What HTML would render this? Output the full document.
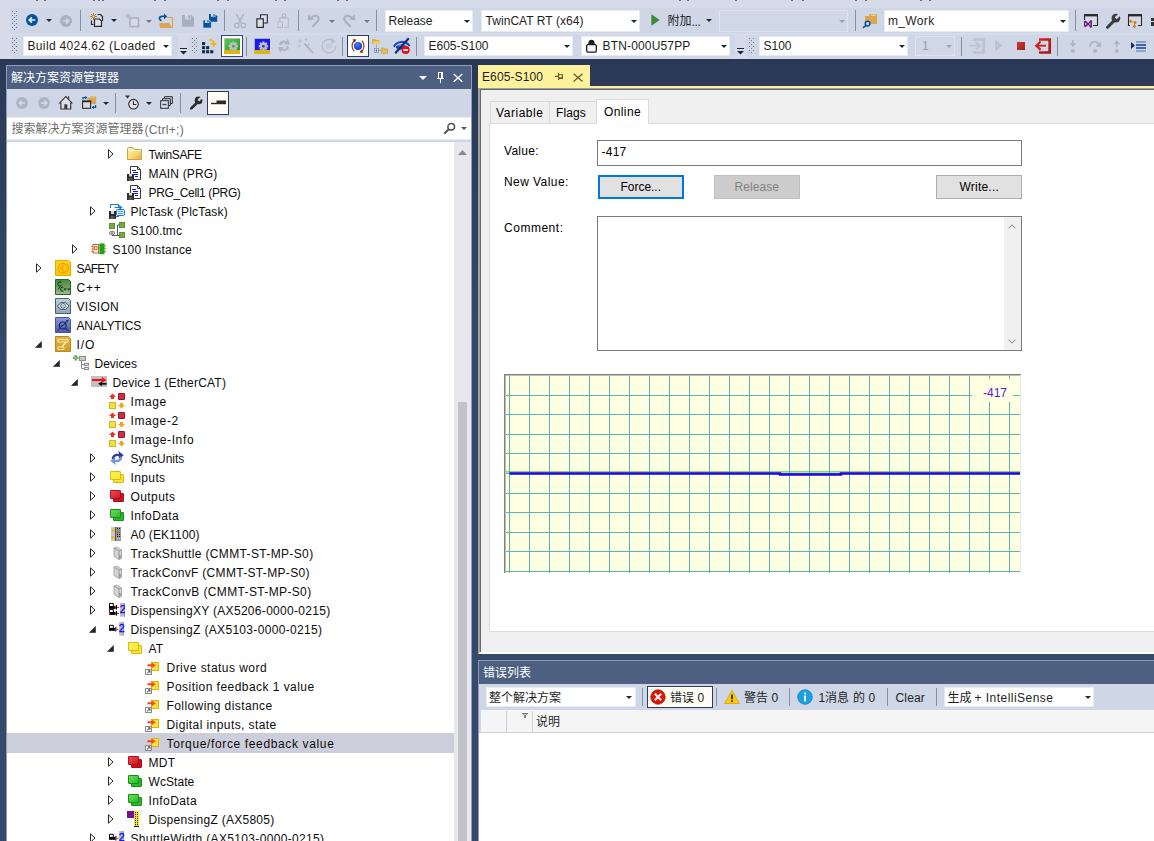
<!DOCTYPE html>
<html><head><meta charset="utf-8"><title>E605-S100 - TwinCAT</title><style>
html,body{margin:0;padding:0}
body{width:1154px;height:841px;overflow:hidden;position:relative;background:#D6DBE9;font-family:'Liberation Sans',sans-serif;}
.b{position:absolute;box-sizing:border-box}
.t{position:absolute;white-space:pre;line-height:16px;height:16px}
.c{font-family:'Liberation Sans','Noto Sans CJK SC',sans-serif;}
</style></head><body>
<svg width="0" height="0" style="position:absolute"><symbol id="s_folder" viewBox="0 0 16 16"><defs><linearGradient id="fg" x1="0" y1="0" x2="1" y2="1"><stop offset="0" stop-color="#FFF3B8"/><stop offset="0.55" stop-color="#FBD973"/><stop offset="1" stop-color="#E8A93A"/></linearGradient></defs><path d="M0.5 2.5Q0.5 1.5 1.5 1.5H6L7.5 3.5H14.5V13.5H0.5Z" fill="url(#fg)" stroke="#C9A24D" stroke-width="1"/><path d="M1 4.5H14" stroke="#FFF8D8" stroke-width="1"/></symbol><symbol id="s_pou" viewBox="0 0 16 16"><path d="M3.5 1.5H10.5L13.5 4.5V14.5H3.5Z" fill="#fff" stroke="#3a3a3a" stroke-width="1"/><path d="M10.5 1.5V4.5H13.5" fill="none" stroke="#3a3a3a" stroke-width="1"/><path d="M5 5.5H9M6 7.5H11M6 9.5H11M8 11.5H11" stroke="#1616E0" stroke-width="1"/><rect x="0" y="9" width="7" height="7" fill="#2b2b2b"/><rect x="2" y="9" width="3" height="2.5" fill="#d8d8d8"/><rect x="1.5" y="13" width="4" height="3" fill="#555"/></symbol><symbol id="s_plctask" viewBox="0 0 16 16"><path d="M1.5 5V1.5H9.5V4" fill="#fff" stroke="#1E78D2" stroke-width="1"/><rect x="7.5" y="6.5" width="8" height="6" rx="1" fill="#D7E8FA" stroke="#1E78D2"/><path d="M9 8.5H14M9 10.5H14" stroke="#5AA0E6" stroke-width="1"/><path d="M10 2.5L12.5 4.5L10 6.5M5.5 4.5H12" fill="none" stroke="#1E78D2" stroke-width="1.2"/><rect x="0" y="8" width="7" height="8" fill="#2b2b2b"/><rect x="2" y="8" width="3" height="3" fill="#d8d8d8"/><rect x="1.5" y="13" width="4" height="3" fill="#555"/><path d="M7 13.5H10" stroke="#1E78D2"/></symbol><symbol id="s_tmc" viewBox="0 0 16 16"><rect x="0.5" y="1.5" width="5" height="5" fill="#6FAE3C" stroke="#5B9431"/><rect x="10.5" y="0.5" width="5" height="5" fill="#6FAE3C" stroke="#5B9431"/><rect x="10.5" y="10.5" width="5" height="5" fill="#6FAE3C" stroke="#5B9431"/><path d="M10.5 3H8.5V13.5H10.5M3 13.5H8.5" fill="none" stroke="#555" stroke-width="1"/><ellipse cx="3" cy="11" rx="2.6" ry="1.8" fill="#ddd" stroke="#666" stroke-width="0.8"/><circle cx="3" cy="11" r="0.8" fill="#444"/></symbol><symbol id="s_instance" viewBox="0 0 16 16"><rect x="2" y="3.5" width="5.5" height="8.5" fill="#FFF1E0" stroke="#C8501E" stroke-width="0.9"/><path d="M0.3 5.5H2M0.3 8H2M0.3 10.5H2M3.5 5.5H6V8.5H3.5Z" stroke="#C8501E" stroke-width="0.8" fill="none"/><rect x="8.4" y="2.4" width="5.2" height="10.8" fill="#12AA12"/><path d="M13.6 5H15.2M13.6 7.8H15.2M13.6 10.6H15.2M7.5 12.6H8.6" stroke="#C8501E" stroke-width="0.9"/></symbol><symbol id="s_safety" viewBox="0 0 16 16"><defs><linearGradient id="qFFD21A" x1="0" y1="0" x2="0" y2="1"><stop offset="0" stop-color="#FFD21A"/><stop offset="1" stop-color="#FFC400"/></linearGradient></defs><path d="M0.5 0.5H13.5L15.5 2.5V15.5H0.5Z" fill="url(#qFFD21A)" stroke="#E0A800"/><path d="M7.8 3V13.4" stroke="#E39400" stroke-width="0.9"/><path d="M7.8 3.3H9.5L10 4.7L11.4 4.1L12.5 5.3L11.8 6.6L13.4 7.2V9L11.8 9.6L12.5 10.9L11.4 12.1L10 11.5L9.5 13.1H7.8" fill="none" stroke="#E39400" stroke-width="0.9"/><path d="M7.8 3.3C6 3 5 4 5 5.2C3.5 5.2 3 6.8 3.8 7.8C2.5 8.5 2.8 10.5 4.2 10.8C4.2 12.5 6 13.4 7.8 13.1" fill="none" stroke="#E39400" stroke-width="0.9"/><path d="M5.5 7.5H7.8M5.5 7.5V9.5" fill="none" stroke="#E39400" stroke-width="0.8"/></symbol><symbol id="s_cpp" viewBox="0 0 16 16"><defs><linearGradient id="q4E8440" x1="0" y1="0" x2="0" y2="1"><stop offset="0" stop-color="#4E8440"/><stop offset="1" stop-color="#A4B784"/></linearGradient></defs><path d="M0.5 0.5H13.5L15.5 2.5V15.5H0.5Z" fill="url(#q4E8440)" stroke="#1E6B2E"/><path d="M6.3 3.6C5 2.2 2.8 3 2.8 5C2.8 6.8 4.6 7.6 6 6.6" fill="none" stroke="#0C4A1C" stroke-width="1.1"/><path d="M2.8 10.5L7 5.5" stroke="#0C4A1C" stroke-width="1"/><path d="M8.3 8.6C7 7.6 5.6 8.6 5.6 10.2C5.6 11.8 7 12.8 8.3 11.8" fill="none" stroke="#0C4A1C" stroke-width="1.1"/><path d="M8.8 10.2H11.4M10.1 8.9V11.5M12.4 10.2H15M13.7 8.9V11.5" stroke="#0C4A1C" stroke-width="1"/></symbol><symbol id="s_vision" viewBox="0 0 16 16"><defs><linearGradient id="qBFD0DA" x1="0" y1="0" x2="0" y2="1"><stop offset="0" stop-color="#BFD0DA"/><stop offset="1" stop-color="#8AA6B6"/></linearGradient></defs><path d="M0.5 0.5H13.5L15.5 2.5V15.5H0.5Z" fill="url(#qBFD0DA)" stroke="#4A6270"/><path d="M2.3 8L6 4.6H10.8L14 8L10.8 11.4H6Z" fill="#CFDDE5" stroke="#3A515E" stroke-width="0.9"/><circle cx="8.1" cy="7.9" r="2.3" fill="#F4F8FA" stroke="#3A515E" stroke-width="0.9"/><circle cx="8.1" cy="7.9" r="0.9" fill="#8FA6B2"/></symbol><symbol id="s_analytics" viewBox="0 0 16 16"><defs><linearGradient id="q8C98D2" x1="0" y1="0" x2="0" y2="1"><stop offset="0" stop-color="#8C98D2"/><stop offset="1" stop-color="#4C5BA6"/></linearGradient></defs><path d="M0.5 0.5H13.5L15.5 2.5V15.5H0.5Z" fill="url(#q8C98D2)" stroke="#4654A4"/><circle cx="7.8" cy="8.4" r="3.4" fill="none" stroke="#1E2A6E" stroke-width="1.2"/><path d="M2.6 13.6L12.6 3.6" stroke="#1E2A6E" stroke-width="1"/><path d="M13.6 2.6L10.6 3.8L12.4 5.6Z" fill="#1E2A6E"/><path d="M10.4 11L13.6 14.2" stroke="#1E2A6E" stroke-width="1.1"/><path d="M5.6 9C6.4 6.6 7.4 10.4 8.4 8.4S9.6 7.2 10 8" fill="none" stroke="#1E2A6E" stroke-width="0.8"/></symbol><symbol id="s_io" viewBox="0 0 16 16"><defs><linearGradient id="qE3B445" x1="0" y1="0" x2="0" y2="1"><stop offset="0" stop-color="#E3B445"/><stop offset="1" stop-color="#D09A25"/></linearGradient></defs><path d="M0.5 0.5H13.5L15.5 2.5V15.5H0.5Z" fill="url(#qE3B445)" stroke="#B98A18"/><path d="M3 3.5H13V6H3ZM3 11H9V13.5H3Z" fill="none" stroke="#FBE6A8" stroke-width="1"/><path d="M11 6L7 11" stroke="#FBE6A8" stroke-width="1.6"/></symbol><symbol id="s_devices" viewBox="0 0 16 16"><path d="M1.7 0H3.8V1.7H5.5V3.8H3.8V5.5H1.7V3.8H0V1.7H1.7Z" fill="#3E9E3E"/><path d="M2.75 0.9V4.6M0.9 2.75H4.6" stroke="#9BE09B" stroke-width="0.7"/><rect x="6.5" y="1.5" width="6" height="4" fill="#C8C8C8" stroke="#8A8A8A"/><path d="M8.5 6V13.5H11M8.5 9.5H11" fill="none" stroke="#8A8A8A"/><rect x="11.5" y="8.5" width="4" height="2" fill="#E8E8E8" stroke="#8A8A8A"/><rect x="11.5" y="12.5" width="4" height="2" fill="#E8E8E8" stroke="#8A8A8A"/></symbol><symbol id="s_ethercat" viewBox="0 0 16 16"><rect x="0" y="2" width="16" height="11" fill="#C0C0C0"/><path d="M1 6H12" stroke="#F01010" stroke-width="2"/><path d="M10.8 3.1L15.6 6L10.8 8.9Z" fill="#F01010"/><path d="M15.6 9.8H10" stroke="#111" stroke-width="1.8"/><path d="M11 7.4L7 9.8L11 12.2Z" fill="#111"/></symbol><symbol id="s_image" viewBox="0 0 16 16"><path d="M3.5 0.5L7 4H5V6H2V4H0Z" fill="#F0301E"/><rect x="9.5" y="0.5" width="6" height="6" rx="0.3" fill="#D03044" stroke="#9A1424"/><rect x="0.5" y="9.5" width="6" height="6" fill="#F2E03C" stroke="#D2B81E"/><path d="M12.5 15.5L9 12H11V10H14V12H16Z" fill="#F2A41A"/></symbol><symbol id="s_sync" viewBox="0 0 16 16"><path d="M2.6 8.8C3 5 6.8 3 10 4.1L9.2 0.8L14.8 5.2L9.9 8.8L9.7 6.2C7.6 5.6 5.4 6.6 5 9.2Z" fill="#2F3FA0"/><path d="M13.4 7.2C13 11 9.2 13 6 11.9L6.8 15.2L1.2 10.8L6.1 7.2L6.3 9.8C8.4 10.4 10.6 9.4 11 6.8Z" fill="#7C92DC"/></symbol><symbol id="s_inputs" viewBox="0 0 16 16"><defs><linearGradient id="vF6F65A" x1="0" y1="0" x2="1" y2="1"><stop offset="0" stop-color="#F6F65A"/><stop offset="1" stop-color="#F2E53A"/></linearGradient></defs><rect x="4.5" y="5.5" width="10" height="8" rx="0.4" fill="#F2E53A" stroke="#E2B800"/><rect x="1.5" y="2.5" width="10" height="8" rx="0.4" fill="url(#vF6F65A)" stroke="#E2B800"/></symbol><symbol id="s_outputs" viewBox="0 0 16 16"><defs><linearGradient id="vF0505A" x1="0" y1="0" x2="1" y2="1"><stop offset="0" stop-color="#F0505A"/><stop offset="1" stop-color="#C8141E"/></linearGradient></defs><rect x="4.5" y="5.5" width="10" height="8" rx="0.4" fill="#C8141E" stroke="#B00E18"/><rect x="1.5" y="2.5" width="10" height="8" rx="0.4" fill="url(#vF0505A)" stroke="#B00E18"/></symbol><symbol id="s_info" viewBox="0 0 16 16"><defs><linearGradient id="v6EE05A" x1="0" y1="0" x2="1" y2="1"><stop offset="0" stop-color="#6EE05A"/><stop offset="1" stop-color="#2EB62A"/></linearGradient></defs><rect x="4.5" y="5.5" width="10" height="8" rx="0.4" fill="#2EB62A" stroke="#149014"/><rect x="1.5" y="2.5" width="10" height="8" rx="0.4" fill="url(#v6EE05A)" stroke="#149014"/></symbol><symbol id="s_ek" viewBox="0 0 16 16"><rect x="2" y="1" width="4" height="14" fill="#C9C9C9"/><rect x="2.5" y="3" width="3" height="3" fill="#F5B21E"/><rect x="2.5" y="10" width="3" height="3" fill="#F5B21E"/><rect x="6" y="1" width="6" height="14" fill="#9A9A9A"/><rect x="6" y="1" width="1" height="14" fill="#555"/><g shape-rendering="crispEdges"><rect x="8" y="2" width="1" height="1" fill="#111"/><rect x="10" y="2" width="1" height="1" fill="#111"/><rect x="8" y="4" width="1" height="1" fill="#0A0"/><rect x="10" y="4" width="1" height="1" fill="#0A0"/><rect x="8" y="6" width="1" height="1" fill="#E00"/><rect x="10" y="6" width="1" height="1" fill="#E00"/><rect x="8" y="8" width="1" height="1" fill="#111"/><rect x="10" y="8" width="1" height="1" fill="#111"/><rect x="8" y="10" width="1" height="1" fill="#00E"/><rect x="10" y="10" width="1" height="1" fill="#00E"/><rect x="8" y="12" width="1" height="1" fill="#EE0"/><rect x="10" y="12" width="1" height="1" fill="#EE0"/></g></symbol><symbol id="s_box" viewBox="0 0 16 16"><path d="M5 3L7.5 2L12.5 5V13.5L10 14.5L5 11.5Z" fill="#D4D4D4" stroke="#9C9C9C" stroke-width="0.8"/><path d="M5 3L10 6V14.5M10 6L12.5 5" fill="none" stroke="#8C8C8C" stroke-width="0.8"/><path d="M11 10V13" stroke="#777" stroke-width="1"/></symbol><symbol id="s_drive2" viewBox="0 0 16 16"><rect x="0" y="4" width="6.6" height="2.9" fill="#000"/><path d="M0.5 4V1.4H4.3V4" fill="none" stroke="#000" stroke-width="1"/><rect x="6.8999999999999995" y="3" width="1.1" height="4.6" fill="#000"/><rect x="8.0" y="4.9" width="2" height="1" fill="#F01010"/><rect x="0" y="10" width="6.6" height="2.9" fill="#000"/><path d="M0.5 10V7.4H4.3V10" fill="none" stroke="#000" stroke-width="1"/><rect x="6.8999999999999995" y="9" width="1.1" height="4.6" fill="#000"/><rect x="8.0" y="10.9" width="2" height="1" fill="#F01010"/><rect x="0" y="9" width="1" height="4" fill="#F01010"/><rect x="11" y="1" width="5" height="13.7" fill="#BEBEBE"/><rect x="15" y="1" width="1" height="13.7" fill="#9A9A9A"/><text x="10.8" y="11.3" font-size="10.5" fill="#0A0AFF" stroke="#0A0AFF" stroke-width="0.3" font-family="Liberation Sans, sans-serif">2</text></symbol><symbol id="s_drive1" viewBox="0 0 16 16"><rect x="0" y="6.9" width="6.0" height="2.9" fill="#000"/><path d="M0.5 6.9V4.3H4.3V6.9" fill="none" stroke="#000" stroke-width="1"/><rect x="6.3" y="5.9" width="1.1" height="4.6" fill="#000"/><rect x="7.4" y="7.800000000000001" width="2" height="1" fill="#F01010"/><rect x="10.1" y="1" width="4.8" height="13.7" fill="#BEBEBE"/><rect x="14" y="1" width="0.9" height="13.7" fill="#9A9A9A"/><text x="9.8" y="11.3" font-size="10.5" fill="#0A0AFF" stroke="#0A0AFF" stroke-width="0.3" font-family="Liberation Sans, sans-serif">2</text></symbol><symbol id="s_link" viewBox="0 0 16 16"><rect x="6.5" y="3.5" width="7" height="8" fill="#F8E040" stroke="#E6B400"/><path d="M2.5 6.3H8" stroke="#F0401E" stroke-width="2"/><path d="M6.6 3.4L10.8 6.3L6.6 9.2Z" fill="#F0501E"/><rect x="0.5" y="10.5" width="6" height="5" fill="#F4F4F4" stroke="#8A8A8A"/><path d="M2 14.3L5 11.8M3 11.8H5V13.8" fill="none" stroke="#444" stroke-width="0.9"/></symbol><symbol id="s_ax5805" viewBox="0 0 16 16"><rect x="0" y="0" width="7" height="7" fill="#7A0E8E"/><rect x="7" y="0" width="5" height="16" fill="#F2EE1A"/><g shape-rendering="crispEdges" fill="#111"><rect x="8" y="1" width="1" height="1"/><rect x="10" y="1" width="1" height="1"/><rect x="8" y="3" width="1" height="1"/><rect x="10" y="3" width="1" height="1"/><rect x="8" y="5" width="1" height="1" fill="#E00"/><rect x="10" y="5" width="1" height="1" fill="#E00"/><rect x="8" y="7" width="1" height="1"/><rect x="10" y="7" width="1" height="1"/><rect x="8" y="9" width="1" height="1" fill="#00E"/><rect x="10" y="9" width="1" height="1" fill="#00E"/><rect x="8" y="11" width="1" height="1"/><rect x="10" y="11" width="1" height="1"/><rect x="8" y="13" width="1" height="1"/><rect x="10" y="13" width="1" height="1"/><rect x="7" y="15" width="5" height="1"/></g></symbol></svg>
<div class="b" style="left:36px;top:0px;width:2px;height:1px;background:#6E6878;"></div>
<div class="b" style="left:44px;top:0px;width:2px;height:1px;background:#6E6878;"></div>
<div class="b" style="left:93px;top:0px;width:2px;height:1px;background:#6E6878;"></div>
<div class="b" style="left:98px;top:0px;width:2px;height:1px;background:#6E6878;"></div>
<div class="b" style="left:102px;top:0px;width:2px;height:1px;background:#6E6878;"></div>
<div class="b" style="left:154px;top:0px;width:2px;height:1px;background:#6E6878;"></div>
<div class="b" style="left:164px;top:0px;width:2px;height:1px;background:#6E6878;"></div>
<div class="b" style="left:217px;top:0px;width:2px;height:1px;background:#6E6878;"></div>
<div class="b" style="left:227px;top:0px;width:2px;height:1px;background:#6E6878;"></div>
<div class="b" style="left:275px;top:0px;width:2px;height:1px;background:#6E6878;"></div>
<div class="b" style="left:284px;top:0px;width:2px;height:1px;background:#6E6878;"></div>
<div class="b" style="left:337px;top:0px;width:2px;height:1px;background:#6E6878;"></div>
<div class="b" style="left:346px;top:0px;width:2px;height:1px;background:#6E6878;"></div>
<div class="b" style="left:679px;top:0px;width:2px;height:1px;background:#6E6878;"></div>
<div class="b" style="left:687px;top:0px;width:2px;height:1px;background:#6E6878;"></div>
<div class="b" style="left:735px;top:0px;width:2px;height:1px;background:#6E6878;"></div>
<div class="b" style="left:791px;top:0px;width:2px;height:1px;background:#6E6878;"></div>
<div class="b" style="left:802px;top:0px;width:2px;height:1px;background:#6E6878;"></div>
<div class="b" style="left:855px;top:0px;width:2px;height:1px;background:#6E6878;"></div>
<div class="b" style="left:865px;top:0px;width:2px;height:1px;background:#6E6878;"></div>
<div class="b" style="left:920px;top:0px;width:2px;height:1px;background:#6E6878;"></div>
<div class="b" style="left:929px;top:0px;width:2px;height:1px;background:#6E6878;"></div>
<div class="b" style="left:10px;top:8px;width:1144px;height:25px;background:#CFD6E5;border-radius:2px 0 0 2px;"></div>
<div class="b" style="left:10px;top:35px;width:168px;height:22.5px;background:#CFD6E5;border-radius:2px;"></div>
<div class="b" style="left:189px;top:35px;width:546px;height:22.5px;background:#CFD6E5;border-radius:2px;"></div>
<div class="b" style="left:746px;top:35px;width:408px;height:22.5px;background:#CFD6E5;border-radius:2px 0 0 2px;"></div>
<svg class="b" style="left:12px;top:11px;shape-rendering:crispEdges;" width="5" height="20" viewBox="0 0 5 20"><g fill="#6A7695"><rect x="0" y="0" width="1" height="1"/><rect x="4" y="0" width="1" height="1"/><rect x="2" y="2" width="1" height="1"/><rect x="0" y="4" width="1" height="1"/><rect x="4" y="4" width="1" height="1"/><rect x="2" y="6" width="1" height="1"/><rect x="0" y="8" width="1" height="1"/><rect x="4" y="8" width="1" height="1"/><rect x="2" y="10" width="1" height="1"/><rect x="0" y="12" width="1" height="1"/><rect x="4" y="12" width="1" height="1"/><rect x="2" y="14" width="1" height="1"/><rect x="0" y="16" width="1" height="1"/><rect x="4" y="16" width="1" height="1"/><rect x="2" y="18" width="1" height="1"/></g></svg>
<svg class="b" style="left:12px;top:38px;shape-rendering:crispEdges;" width="5" height="16" viewBox="0 0 5 16"><g fill="#6A7695"><rect x="0" y="0" width="1" height="1"/><rect x="4" y="0" width="1" height="1"/><rect x="2" y="2" width="1" height="1"/><rect x="0" y="4" width="1" height="1"/><rect x="4" y="4" width="1" height="1"/><rect x="2" y="6" width="1" height="1"/><rect x="0" y="8" width="1" height="1"/><rect x="4" y="8" width="1" height="1"/><rect x="2" y="10" width="1" height="1"/><rect x="0" y="12" width="1" height="1"/><rect x="4" y="12" width="1" height="1"/><rect x="2" y="14" width="1" height="1"/></g></svg>
<svg class="b" style="left:192px;top:38px;shape-rendering:crispEdges;" width="5" height="16" viewBox="0 0 5 16"><g fill="#6A7695"><rect x="0" y="0" width="1" height="1"/><rect x="4" y="0" width="1" height="1"/><rect x="2" y="2" width="1" height="1"/><rect x="0" y="4" width="1" height="1"/><rect x="4" y="4" width="1" height="1"/><rect x="2" y="6" width="1" height="1"/><rect x="0" y="8" width="1" height="1"/><rect x="4" y="8" width="1" height="1"/><rect x="2" y="10" width="1" height="1"/><rect x="0" y="12" width="1" height="1"/><rect x="4" y="12" width="1" height="1"/><rect x="2" y="14" width="1" height="1"/></g></svg>
<svg class="b" style="left:749px;top:38px;shape-rendering:crispEdges;" width="5" height="16" viewBox="0 0 5 16"><g fill="#6A7695"><rect x="0" y="0" width="1" height="1"/><rect x="4" y="0" width="1" height="1"/><rect x="2" y="2" width="1" height="1"/><rect x="0" y="4" width="1" height="1"/><rect x="4" y="4" width="1" height="1"/><rect x="2" y="6" width="1" height="1"/><rect x="0" y="8" width="1" height="1"/><rect x="4" y="8" width="1" height="1"/><rect x="2" y="10" width="1" height="1"/><rect x="0" y="12" width="1" height="1"/><rect x="4" y="12" width="1" height="1"/><rect x="2" y="14" width="1" height="1"/></g></svg>
<svg class="b" style="left:26px;top:14px;" width="12" height="12" viewBox="0 0 12 12"><circle cx="6" cy="6" r="6" fill="#00539C"/><path d="M9.3 6H3.6M5.9 3.3L3.2 6L5.9 8.7" fill="none" stroke="#E6ECF5" stroke-width="1.7"/></svg>
<svg class="b" style="left:46.0px;top:19.0px;" width="6" height="3.0" viewBox="0 0 6 3.0"><path d="M0 0H6L3.0 3.0Z" fill="#1B293E"/></svg>
<svg class="b" style="left:60px;top:14.5px;" width="12" height="12" viewBox="0 0 12 12"><circle cx="6" cy="6" r="6" fill="#A9AFBF"/><path d="M2.7 6H8.4M6.1 3.3L8.8 6L6.1 8.7" fill="none" stroke="#D3D8E4" stroke-width="1.7"/></svg>
<div class="b" style="left:80px;top:10px;width:1px;height:21px;background:#8591A2;"></div>
<svg class="b" style="left:89px;top:12px;" width="15" height="15" viewBox="0 0 15 15"><path d="M8.5 2.5H11.5L13.5 4.5V9" fill="none" stroke="#2B2B2B" stroke-width="1.2"/><path d="M2.5 8.5V12.5H4.5" fill="none" stroke="#2B2B2B" stroke-width="1.2"/><path d="M5.5 7H10.5L12.5 9V14.4H5.5Z" fill="#E0E2EC" stroke="#2B2B2B" stroke-width="1.2"/><path d="M4.5 1V8M1 4.5H8M2 2L7 7M7 2L2 7" stroke="#C27D1A" stroke-width="1"/><circle cx="4.5" cy="4.5" r="1.1" fill="#CFD6E5"/></svg>
<svg class="b" style="left:111.0px;top:19.0px;" width="6" height="3.0" viewBox="0 0 6 3.0"><path d="M0 0H6L3.0 3.0Z" fill="#1B293E"/></svg>
<svg class="b" style="left:125px;top:13px;" width="15" height="15" viewBox="0 0 15 15"><path d="M3 0V6M0 3H6" stroke="#B4BACA" stroke-width="1.6"/><rect x="5" y="5" width="8.5" height="8.5" fill="#D7DBE6" stroke="#AAB0C0" stroke-width="1.6"/></svg>
<svg class="b" style="left:146.0px;top:20.0px;" width="6" height="3.0" viewBox="0 0 6 3.0"><path d="M0 0H6L3.0 3.0Z" fill="#7A7672"/></svg>
<svg class="b" style="left:158px;top:13px;" width="16" height="16" viewBox="158 13 16 16"><path d="M162 23V18H172.5" fill="none" stroke="#CDD2E2" stroke-width="1"/><path d="M162.5 22.5V18.5H172V27Z" fill="#D2D6E6"/><path d="M167 17.5H172.6V27.8" fill="none" stroke="#DCA64E" stroke-width="1.1"/><path d="M159 23H169.3L172.2 27.9H160.4Z" fill="#DCA64E"/><path d="M161.5 20.6C158.6 19.6 158.8 16.3 162 16.3H165" fill="none" stroke="#00539C" stroke-width="1.7"/><path d="M164 13.6L167.3 16.4L164 19.2Z" fill="#00539C"/></svg>
<svg class="b" style="left:182px;top:14px;" width="13" height="14" viewBox="182 14 13 14"><path d="M182 15H191.6L194 17.4V26.8H182Z" fill="#A9AFBF"/><rect x="185" y="15" width="6" height="4.6" fill="#CDD3E0"/><rect x="188.1" y="15.3" width="2.1" height="2.9" fill="#A9AFBF"/></svg>
<svg class="b" style="left:202px;top:13px;" width="16" height="16" viewBox="202 13 16 16"><path d="M209 14H215L217.2 16.2V21.8H209Z" fill="#00539C"/><rect x="211" y="14" width="4.6" height="2.7" fill="#DCE2EE"/><rect x="213.4" y="14.2" width="1.3" height="1.9" fill="#00539C"/><path d="M203 20H209.2L211.3 22.1V28H203Z" fill="#00539C" stroke="#CFD6E5" stroke-width="0.7"/><rect x="205" y="20.3" width="4.4" height="2.6" fill="#DCE2EE"/><rect x="207.3" y="20.5" width="1.2" height="1.8" fill="#00539C"/></svg>
<div class="b" style="left:224px;top:10px;width:1px;height:21px;background:#8591A2;"></div>
<svg class="b" style="left:233px;top:13px;" width="14" height="16" viewBox="233 13 14 16"><path d="M236.2 14L241.2 23M243.8 14L238.8 23" stroke="#AEB4C3" stroke-width="1.5" fill="none"/><path d="M236.4 14L240 20.5L243.6 14" fill="none" stroke="#AEB4C3" stroke-width="0.8"/><circle cx="236.9" cy="25.4" r="2.3" fill="none" stroke="#AEB4C3" stroke-width="1.2"/><circle cx="243.3" cy="25.4" r="2.3" fill="none" stroke="#AEB4C3" stroke-width="1.2"/></svg>
<svg class="b" style="left:255px;top:13px;" width="14" height="16" viewBox="255 13 14 16"><path d="M260.5 18V14.7H267.3V23H264" fill="#DDDFEB" stroke="#2B2B2B" stroke-width="1.1"/><rect x="256.9" y="18.8" width="6.4" height="8.6" fill="#DDDFEB" stroke="#2B2B2B" stroke-width="1.2"/></svg>
<svg class="b" style="left:276px;top:12px;" width="14" height="17" viewBox="276 12 14 17"><path d="M279.8 21V17.9H288.2V27.3H284" fill="#D6DAE5" stroke="#B4BACA" stroke-width="1.1"/><circle cx="284" cy="15.6" r="1.7" fill="none" stroke="#B4BACA" stroke-width="1.1"/><path d="M281.5 17.9H286.5" stroke="#B4BACA" stroke-width="1.6"/><rect x="277.9" y="21.8" width="4.6" height="5.6" fill="#D6DAE5" stroke="#B4BACA" stroke-width="1.1"/></svg>
<div class="b" style="left:298px;top:10px;width:1px;height:21px;background:#8591A2;"></div>
<svg class="b" style="left:306px;top:12px;" width="16" height="17" viewBox="306 12 16 17"><path d="M311 18.2C314 14.2 319.6 15.6 318.6 19.6C318 21.5 315 24 312.2 26.8" fill="none" stroke="#AAB0C0" stroke-width="2"/><path d="M308 14.4V20.2L314 19.4Z" fill="#AAB0C0"/></svg>
<svg class="b" style="left:329.0px;top:20.0px;" width="6" height="3.0" viewBox="0 0 6 3.0"><path d="M0 0H6L3.0 3.0Z" fill="#7A7672"/></svg>
<svg class="b" style="left:341px;top:12px;" width="16" height="17" viewBox="341 12 16 17"><path d="M352 18.2C349 14.2 343.4 15.6 344.4 19.6C345 21.5 348 24 350.8 26.8" fill="none" stroke="#AAB0C0" stroke-width="2"/><path d="M355 14.4V20.2L349 19.4Z" fill="#AAB0C0"/></svg>
<svg class="b" style="left:364.0px;top:20.0px;" width="6" height="3.0" viewBox="0 0 6 3.0"><path d="M0 0H6L3.0 3.0Z" fill="#7A7672"/></svg>
<div class="b" style="left:376px;top:10px;width:1px;height:21px;background:#8591A2;"></div>
<div class="b" style="left:385px;top:9.5px;width:88px;height:22px;background:#fff;border:1px solid #E5EAF3;"></div>
<span class="t" style="left:388.5px;top:12.5px;font-size:12px;color:#1E1E1E;letter-spacing:-0.004px;">Release</span>
<svg class="b" style="left:463.5px;top:19.5px;" width="6" height="3.0" viewBox="0 0 6 3.0"><path d="M0 0H6L3.0 3.0Z" fill="#1B293E"/></svg>
<div class="b" style="left:481px;top:9.5px;width:159px;height:22px;background:#fff;border:1px solid #E5EAF3;"></div>
<span class="t" style="left:485.5px;top:12.5px;font-size:12px;color:#1E1E1E;letter-spacing:0.054px;">TwinCAT RT (x64)</span>
<svg class="b" style="left:630.5px;top:19.5px;" width="6" height="3.0" viewBox="0 0 6 3.0"><path d="M0 0H6L3.0 3.0Z" fill="#1B293E"/></svg>
<svg class="b" style="left:651px;top:14px;" width="9" height="12" viewBox="0 0 9 12"><path d="M0.3 0.3L8.7 6L0.3 11.7Z" fill="#388A34"/></svg>
<span class="t c" style="left:667.5px;top:13px;font-size:12px;color:#1E1E1E;">附加</span>
<span class="t" style="left:691.5px;top:13.5px;font-size:12px;color:#1E1E1E;letter-spacing:-0.339px;">...</span>
<svg class="b" style="left:706.0px;top:19.0px;" width="6" height="3.0" viewBox="0 0 6 3.0"><path d="M0 0H6L3.0 3.0Z" fill="#1B293E"/></svg>
<div class="b" style="left:719px;top:9.5px;width:129px;height:22px;background:#D0D7E6;border:1px solid #DDE2EE;"></div>
<svg class="b" style="left:838.5px;top:19.5px;" width="6" height="3.0" viewBox="0 0 6 3.0"><path d="M0 0H6L3.0 3.0Z" fill="#9AA0AE"/></svg>
<div class="b" style="left:855px;top:10px;width:1px;height:21px;background:#8591A2;"></div>
<svg class="b" style="left:862px;top:12px;" width="16" height="17" viewBox="862 12 16 17"><path d="M865 16.1H869.4V13.9H877V23.9H865Z" fill="#DCA64E"/><path d="M871 15.2H876" stroke="#F6E6C8" stroke-width="0.9"/><circle cx="867.6" cy="23.6" r="2.4" fill="#CDD0DE" stroke="#00539C" stroke-width="1.4"/><path d="M866 25.3L863.5 27.4" stroke="#00539C" stroke-width="1.6" stroke-linecap="round"/></svg>
<div class="b" style="left:884px;top:9.5px;width:185px;height:22px;background:#fff;border:1px solid #E5EAF3;"></div>
<span class="t" style="left:888px;top:12.5px;font-size:12px;color:#1E1E1E;letter-spacing:0.341px;">m_Work</span>
<svg class="b" style="left:1059.5px;top:19.5px;" width="6" height="3.0" viewBox="0 0 6 3.0"><path d="M0 0H6L3.0 3.0Z" fill="#1B293E"/></svg>
<div class="b" style="left:1075px;top:10px;width:1px;height:21px;background:#8591A2;"></div>
<svg class="b" style="left:1083px;top:13px;" width="16" height="16" viewBox="1083 13 16 16"><rect x="1084.5" y="15" width="13" height="10.8" fill="#D7D9E6"/><path d="M1084 15.2H1098" stroke="#2B2B2B" stroke-width="2.4"/><path d="M1084.5 16V20M1097.5 16V25.5H1093" fill="none" stroke="#2B2B2B" stroke-width="1.1"/><path d="M1084 21.3L1085.3 20.6L1088.3 23L1090.6 20L1092 20.6V27.3L1090.6 27.9L1088.3 24.9L1085.3 27.3L1084 26.6Z M1085.2 22.6V25.3L1086.9 24Z M1090.4 22.4L1089 24L1090.4 25.6Z" fill="#68217A" fill-rule="evenodd"/></svg>
<svg class="b" style="left:1105px;top:13px;" width="16" height="16" viewBox="0 0 16 16"><path d="M9.4 7.4L2.6 14.2" stroke="#3A3A3A" stroke-width="3" stroke-linecap="round"/><circle cx="10.9" cy="5.1" r="4.4" fill="#3A3A3A"/><rect x="10.6" y="3.75" width="7" height="2.7" fill="#CFD6E5" transform="rotate(-45 10.9 5.1)"/></svg>
<svg class="b" style="left:1127px;top:13px;" width="16" height="16" viewBox="1127 13 16 16"><rect x="1128.5" y="15" width="13" height="10.8" fill="#D7D9E6"/><path d="M1128 15.2H1142" stroke="#2B2B2B" stroke-width="2.4"/><path d="M1128.5 16V25.5H1130M1141.5 16V25.5H1138" fill="none" stroke="#2B2B2B" stroke-width="1.1"/><path d="M1130.5 21.3L1135 22.6L1134.4 26.4" fill="none" stroke="#CD8214" stroke-width="1"/><path d="M1130.5 19.6L1132.2 21.3L1130.5 23L1128.8 21.3Z M1135.2 20.8L1136.9 22.5L1135.2 24.2L1133.5 22.5Z M1134.4 24.6L1136.2 26.4L1134.4 28.2L1132.6 26.4Z" fill="#CD8214"/></svg>
<div class="b" style="left:1151px;top:18px;width:3px;height:3px;background:#323232;"></div>
<div class="b" style="left:1151px;top:22px;width:3px;height:4px;background:#323232;"></div>
<div class="b" style="left:23px;top:36px;width:149px;height:20px;background:#fff;border:1px solid #E5EAF3;"></div>
<span class="t" style="left:27.5px;top:37.5px;font-size:12px;color:#1E1E1E;letter-spacing:0.344px;">Build 4024.62 (Loaded</span>
<svg class="b" style="left:162.5px;top:45.0px;" width="6" height="3.0" viewBox="0 0 6 3.0"><path d="M0 0H6L3.0 3.0Z" fill="#1B293E"/></svg>
<svg class="b" style="left:179.5px;top:48px;" width="7" height="7" viewBox="0 0 7 7"><path d="M0 0.5H7" stroke="#1B293E" stroke-width="1"/><path d="M0 3H7L3.5 6.5Z" fill="#1B293E"/></svg>
<svg class="b" style="left:201px;top:38px;" width="17" height="16" viewBox="201 38 17 16"><g fill="#0C3450"><rect x="202" y="42" width="3.1" height="3.1"/><rect x="202" y="46.1" width="3.1" height="3.1"/><rect x="202" y="50.2" width="3.1" height="3.1"/><rect x="206.1" y="46.1" width="3.1" height="3.1"/><rect x="206.1" y="50.2" width="3.1" height="3.1"/><rect x="210.2" y="50.2" width="3.1" height="3.1"/></g><path d="M209 39.8C212 39.6 213.8 41 213.8 43.5" fill="none" stroke="#F5B41E" stroke-width="1.6"/><path d="M210.3 43H217.3L213.8 47.2Z" fill="#F5B41E"/></svg>
<div class="b" style="left:221px;top:35px;width:22px;height:22px;background:#FDFCF8;border:1px solid #37466E;"></div>
<svg class="b" style="left:224px;top:38px;" width="16" height="16" viewBox="0 0 16 16"><defs><linearGradient id="gg" x1="0" y1="0" x2="1" y2="1"><stop offset="0" stop-color="#58C858"/><stop offset="1" stop-color="#1E9E1E"/></linearGradient></defs><rect x="0" y="0" width="16" height="16" fill="#B4BEB0"/><rect x="1" y="1" width="15" height="11.5" fill="url(#gg)"/><rect x="0" y="12" width="16" height="4" fill="#DCB414"/><rect x="8.25" y="3.4999999999999996" width="2.3" height="3" fill="#BEBEBE" transform="rotate(0 9.4 8.2)"/><rect x="8.25" y="3.4999999999999996" width="2.3" height="3" fill="#BEBEBE" transform="rotate(45 9.4 8.2)"/><rect x="8.25" y="3.4999999999999996" width="2.3" height="3" fill="#BEBEBE" transform="rotate(90 9.4 8.2)"/><rect x="8.25" y="3.4999999999999996" width="2.3" height="3" fill="#BEBEBE" transform="rotate(135 9.4 8.2)"/><rect x="8.25" y="3.4999999999999996" width="2.3" height="3" fill="#BEBEBE" transform="rotate(180 9.4 8.2)"/><rect x="8.25" y="3.4999999999999996" width="2.3" height="3" fill="#BEBEBE" transform="rotate(225 9.4 8.2)"/><rect x="8.25" y="3.4999999999999996" width="2.3" height="3" fill="#BEBEBE" transform="rotate(270 9.4 8.2)"/><rect x="8.25" y="3.4999999999999996" width="2.3" height="3" fill="#BEBEBE" transform="rotate(315 9.4 8.2)"/><circle cx="9.4" cy="8.2" r="3.3" fill="#BEBEBE"/><circle cx="9.4" cy="8.2" r="1.32" fill="#2EA82E"/></svg>
<div class="b" style="left:246px;top:37px;width:1px;height:19px;background:#8591A2;"></div>
<svg class="b" style="left:254px;top:38px;" width="16" height="16" viewBox="0 0 16 16"><rect x="0" y="0" width="16" height="16" fill="#A8AED0"/><rect x="1" y="1" width="15" height="11.5" fill="#1818F0"/><rect x="0" y="12" width="16" height="4" fill="#DCB414"/><rect x="8.25" y="3.4999999999999996" width="2.3" height="3" fill="#BEBEBE" transform="rotate(0 9.4 8.2)"/><rect x="8.25" y="3.4999999999999996" width="2.3" height="3" fill="#BEBEBE" transform="rotate(45 9.4 8.2)"/><rect x="8.25" y="3.4999999999999996" width="2.3" height="3" fill="#BEBEBE" transform="rotate(90 9.4 8.2)"/><rect x="8.25" y="3.4999999999999996" width="2.3" height="3" fill="#BEBEBE" transform="rotate(135 9.4 8.2)"/><rect x="8.25" y="3.4999999999999996" width="2.3" height="3" fill="#BEBEBE" transform="rotate(180 9.4 8.2)"/><rect x="8.25" y="3.4999999999999996" width="2.3" height="3" fill="#BEBEBE" transform="rotate(225 9.4 8.2)"/><rect x="8.25" y="3.4999999999999996" width="2.3" height="3" fill="#BEBEBE" transform="rotate(270 9.4 8.2)"/><rect x="8.25" y="3.4999999999999996" width="2.3" height="3" fill="#BEBEBE" transform="rotate(315 9.4 8.2)"/><circle cx="9.4" cy="8.2" r="3.3" fill="#BEBEBE"/><circle cx="9.4" cy="8.2" r="1.32" fill="#3030D0"/></svg>
<svg class="b" style="left:277px;top:37px;" width="14" height="17" viewBox="277 37 14 17"><path d="M279 45C279 40.5 284 39.5 286.5 41.2L287.8 38.6L290 44.6L283.8 44.4L285.2 42.9C283.5 42.2 281.5 43 281.5 45.6Z" fill="#B0B6C5"/><path d="M289 46.5C289 51 284 52 281.5 50.3L280.2 52.9L278 46.9L284.2 47.1L282.8 48.6C284.5 49.3 286.5 48.5 286.5 45.9Z" fill="#B0B6C5"/></svg>
<svg class="b" style="left:297px;top:38px;" width="17" height="16" viewBox="0 0 17 16"><path d="M7.5 5.5L16 15" stroke="#A9AFBF" stroke-width="1.8"/><path d="M3 1V5M1 3H5M9 0V3M7.5 1.5H10.5M2.5 7V9.5M1.2 8.2H3.8M11.5 5.5V7.5M10.5 6.5H12.5" stroke="#B4BACA" stroke-width="0.9"/></svg>
<svg class="b" style="left:321px;top:38px;" width="16" height="16" viewBox="0 0 16 16"><path d="M13 3.5A6.8 6.8 0 1 0 14.8 8" fill="none" stroke="#B4BACA" stroke-width="1.2"/><path d="M10.5 0.5L14.5 3.5L10.5 5.5Z" fill="#B4BACA"/><rect x="5" y="5.5" width="6" height="5" rx="1" fill="#C5CAD8"/></svg>
<div class="b" style="left:342px;top:37px;width:1px;height:19px;background:#8591A2;"></div>
<div class="b" style="left:347px;top:35px;width:22px;height:22px;background:#FDFCF8;border:1px solid #2B3D5E;"></div>
<svg class="b" style="left:350px;top:38px;" width="16" height="16" viewBox="0 0 16 16"><defs><radialGradient id="bb" cx="0.4" cy="0.35" r="0.7"><stop offset="0" stop-color="#4A80F0"/><stop offset="1" stop-color="#0A38C8"/></radialGradient></defs><circle cx="8" cy="8" r="4.1" fill="url(#bb)"/><path d="M4.3 2.6C1.3 5.2 1.3 10.8 4.3 13.4" fill="none" stroke="#A02810" stroke-width="1.1"/><path d="M2.6 1.2L6.4 1.6L4.6 4.6Z" fill="#8A1408"/><path d="M11.7 13.4C14.7 10.8 14.7 5.2 11.7 2.6" fill="none" stroke="#A02810" stroke-width="1.1"/><path d="M13.4 14.8L9.6 14.4L11.4 11.4Z" fill="#8A1408"/></svg>
<svg class="b" style="left:371px;top:37px;" width="18" height="18" viewBox="0 0 18 18"><path d="M1 2H4L5 3H8.5V7H1Z" fill="#D8B04A"/><path d="M1.5 7L2.8 4.2H9.5L8.5 7Z" fill="#F0CC66"/><path d="M5.5 7.5V13.5H10" fill="none" stroke="#9AA0AE" stroke-width="0.9"/><rect x="3.5" y="11.5" width="4" height="4" fill="#E4E8F4" stroke="#7D8CC0" stroke-width="0.8"/><path d="M4.5 13.5H6.5M5.5 12.5V14.5" stroke="#3A50B0" stroke-width="0.8"/><path d="M10.5 11H13L13.8 12H16.5V16.5H10.5Z" fill="#E2BE50" stroke="#C09A30" stroke-width="0.6"/></svg>
<svg class="b" style="left:393px;top:37px;" width="18" height="18" viewBox="0 0 18 18"><path d="M0.8 9.8C4 3.8 12.5 3.2 16.5 9" fill="none" stroke="#1A46C8" stroke-width="2.2"/><path d="M2.5 10.5C5 6.5 11.5 6 14.5 10.2C11 13.5 5.5 13.5 2.5 10.5Z" fill="#1A46C8"/><path d="M5 8.5C7 7 10 7 12 8.5L8 10Z" fill="#7A9CE8"/><path d="M2.2 16.2L15.8 1.2" stroke="#14286E" stroke-width="2.1"/><circle cx="12.6" cy="13" r="4.1" fill="#E01414"/><rect x="10.2" y="12.2" width="4.8" height="1.7" fill="#fff"/></svg>
<div class="b" style="left:416px;top:37px;width:1px;height:19px;background:#8591A2;"></div>
<div class="b" style="left:424px;top:36px;width:149px;height:20px;background:#fff;border:1px solid #E5EAF3;"></div>
<span class="t" style="left:428.5px;top:37.5px;font-size:12px;color:#1E1E1E;letter-spacing:-0.005px;">E605-S100</span>
<svg class="b" style="left:563.5px;top:45.0px;" width="6" height="3.0" viewBox="0 0 6 3.0"><path d="M0 0H6L3.0 3.0Z" fill="#1B293E"/></svg>
<div class="b" style="left:581px;top:36px;width:149px;height:20px;background:#fff;border:1px solid #E5EAF3;"></div>
<span class="t" style="left:602.5px;top:37.5px;font-size:12px;color:#1E1E1E;letter-spacing:0.163px;">BTN-000U57PP</span>
<svg class="b" style="left:720.5px;top:45.0px;" width="6" height="3.0" viewBox="0 0 6 3.0"><path d="M0 0H6L3.0 3.0Z" fill="#1B293E"/></svg>
<svg class="b" style="left:586px;top:39px;" width="11" height="14" viewBox="0 0 11 14"><path d="M2.3 6.5V4.2C2.3 -0.3 8.7 -0.3 8.7 4.2V6.5Z" fill="#1E1E1E"/><rect x="0.7" y="5.6" width="9.6" height="7.6" rx="1.2" fill="#FAFAFA" stroke="#1E1E1E" stroke-width="1.3"/></svg>
<svg class="b" style="left:736.5px;top:48px;" width="7" height="7" viewBox="0 0 7 7"><path d="M0 0.5H7" stroke="#1B293E" stroke-width="1"/><path d="M0 3H7L3.5 6.5Z" fill="#1B293E"/></svg>
<div class="b" style="left:759px;top:36px;width:149px;height:20px;background:#fff;border:1px solid #E5EAF3;"></div>
<span class="t" style="left:763.5px;top:37.5px;font-size:12px;color:#1E1E1E;letter-spacing:-0.008px;">S100</span>
<svg class="b" style="left:898.5px;top:45.0px;" width="6" height="3.0" viewBox="0 0 6 3.0"><path d="M0 0H6L3.0 3.0Z" fill="#1B293E"/></svg>
<div class="b" style="left:915px;top:36px;width:40px;height:20px;background:#D0D7E6;border:1px solid #DDE2EE;"></div>
<span class="t" style="left:922px;top:37.5px;font-size:12px;color:#9AA0AE;letter-spacing:-0.688px;">1</span>
<svg class="b" style="left:945.5px;top:45.0px;" width="6" height="3.0" viewBox="0 0 6 3.0"><path d="M0 0H6L3.0 3.0Z" fill="#9AA0AE"/></svg>
<div class="b" style="left:961px;top:37px;width:1px;height:19px;background:#8591A2;"></div>
<svg class="b" style="left:968px;top:37px;" width="18" height="18" viewBox="968 37 18 18"><path d="M973 39.5H983.7V52.5H973" fill="none" stroke="#BCC2D0" stroke-width="2.7"/><path d="M969 45.7H979.5" stroke="#BCC2D0" stroke-width="1.6"/><path d="M975.6 42L980.3 45.7L975.6 49.4" fill="none" stroke="#BCC2D0" stroke-width="1.8"/></svg>
<svg class="b" style="left:994px;top:38px;" width="10" height="15" viewBox="994 38 10 15"><path d="M995 39.2V51.8L1002.2 45.5Z" fill="#BCC2D0"/></svg>
<div class="b" style="left:1017px;top:42px;width:8px;height:8px;background:linear-gradient(135deg,#C83838,#A82020);"></div>
<svg class="b" style="left:1034px;top:37px;" width="18" height="18" viewBox="1034 37 18 18"><defs><linearGradient id="rg" x1="0" y1="0" x2="1" y2="1"><stop offset="0" stop-color="#E02020"/><stop offset="1" stop-color="#9A1C1C"/></linearGradient></defs><path d="M1039 39.5H1049.7V52.5H1039" fill="none" stroke="url(#rg)" stroke-width="2.7"/><path d="M1036.5 45.7H1046" stroke="#C82424" stroke-width="1.9"/><path d="M1040.6 41.5L1036.3 45.7L1040.6 49.9" fill="none" stroke="#C82424" stroke-width="2.2"/></svg>
<div class="b" style="left:1057px;top:37px;width:1px;height:19px;background:#8591A2;"></div>
<svg class="b" style="left:1068px;top:38px;" width="10" height="17" viewBox="1068 38 10 17"><path d="M1072.9 40V46" stroke="#AEB4C4" stroke-width="1.7"/><path d="M1069.7 43H1076.1L1072.9 47.2Z" fill="#AEB4C4"/><circle cx="1072.9" cy="51.1" r="2" fill="#AEB4C4"/></svg>
<svg class="b" style="left:1088px;top:38px;" width="15" height="17" viewBox="1088 38 15 17"><path d="M1090 46.3C1090.8 41 1097 40.6 1099 44.6" fill="none" stroke="#AEB4C4" stroke-width="1.8"/><path d="M1095.3 46.4L1101.2 41.8V47.2Z" fill="#AEB4C4"/><circle cx="1095" cy="51.1" r="2" fill="#AEB4C4"/></svg>
<svg class="b" style="left:1112px;top:38px;" width="10" height="17" viewBox="1112 38 10 17"><path d="M1116.8 41V47.2" stroke="#AEB4C4" stroke-width="1.7"/><path d="M1113.6 44.2H1120L1116.8 40Z" fill="#AEB4C4"/><circle cx="1116.8" cy="51.1" r="2" fill="#AEB4C4"/></svg>
<svg class="b" style="left:1130px;top:40px;" width="17" height="13" viewBox="1130 40 17 13"><path d="M1131 42.1V49L1134.9 45.6Z" fill="#14286E"/><path d="M1136 42.1H1146M1136 51.1H1146" stroke="#7891AF" stroke-width="1.5"/><path d="M1136 45H1146M1136 48H1146" stroke="#143CA0" stroke-width="1.7"/></svg>
<div class="b" style="left:0px;top:59px;width:1154px;height:782px;background:linear-gradient(#293955 0,#35496A 300px);"></div>
<div class="b" style="left:6px;top:65px;width:466px;height:776px;background:#fff;border:1px solid #8E9BBC;border-bottom:none;"></div>
<div class="b" style="left:7px;top:66px;width:464px;height:23px;background:#4D6082;"></div>
<span class="t c" style="left:11px;top:70px;font-size:12px;color:#fff;">解决方案资源管理器</span>
<svg class="b" style="left:419px;top:76px;" width="8" height="4" viewBox="0 0 8 4"><path d="M0 0H8L4 4Z" fill="#F0F2F6"/></svg>
<svg class="b" style="left:435px;top:71px;" width="11" height="12" viewBox="0 0 11 12"><path d="M3.5 1V7M7.5 1V7M3.5 1.5H7.5M6.5 1V7M2 7.5H9M5.5 8V12" fill="none" stroke="#fff" stroke-width="1"/></svg>
<svg class="b" style="left:453px;top:72px;" width="10" height="10" viewBox="0 0 10 10"><path d="M0.7 2L9.3 9.8M9.3 2L0.7 9.8" stroke="#fff" stroke-width="1.3"/></svg>
<div class="b" style="left:7px;top:89px;width:464px;height:29px;background:#CFD6E5;"></div>
<svg class="b" style="left:16px;top:97px;" width="12" height="12" viewBox="0 0 12 12"><circle cx="6" cy="6" r="5.9" fill="#AEB4C3"/><path d="M9 6H3.6M5.8 3.5L3.3 6L5.8 8.5" fill="none" stroke="#D6DAE4" stroke-width="1.5"/></svg>
<svg class="b" style="left:38px;top:97px;" width="12" height="12" viewBox="0 0 12 12"><circle cx="6" cy="6" r="5.9" fill="#AEB4C3"/><path d="M3 6H8.4M6.2 3.5L8.7 6L6.2 8.5" fill="none" stroke="#D6DAE4" stroke-width="1.5"/></svg>
<svg class="b" style="left:58px;top:95px;" width="16" height="15" viewBox="58 95 16 15"><path d="M68.6 99V96.3" stroke="#3A3A3A" stroke-width="1.1"/><path d="M59.3 103.5L65.8 96.8L72.3 103.5" fill="none" stroke="#3A3A3A" stroke-width="1.3"/><path d="M60.9 102.5V109H70.7V102.5L65.8 97.6Z" fill="#DCDEE8"/><path d="M60.9 102.5V109H70.7V102.5" fill="none" stroke="#3A3A3A" stroke-width="1.2"/><rect x="64.3" y="104.3" width="3" height="4.7" fill="#3A3A3A"/></svg>
<svg class="b" style="left:81px;top:95px;" width="16" height="15" viewBox="81 95 16 15"><path d="M87.4 97.4H90.5L91.4 96H96.2V104H87.4Z" fill="#DCA64E"/><path d="M92.3 97H95.3" stroke="#F6E6C8" stroke-width="0.8"/><rect x="82.6" y="101.5" width="8" height="6.8" fill="#D9DBE7" stroke="#2B2B2B" stroke-width="1.1"/><path d="M82 101.3H91.2" stroke="#2B2B2B" stroke-width="1.9"/><path d="M83 99.5V97.6H85.8" fill="none" stroke="#00539C" stroke-width="1.2"/><path d="M85.2 95.8L87.3 97.6L85.2 99.4Z" fill="#00539C"/><path d="M95.6 105V107.4H93.2" fill="none" stroke="#00539C" stroke-width="1.2"/><path d="M93.8 105.6L91.7 107.4L93.8 109.2Z" fill="#00539C"/></svg>
<svg class="b" style="left:102.5px;top:101.5px;" width="6" height="3.0" viewBox="0 0 6 3.0"><path d="M0 0H6L3.0 3.0Z" fill="#1B293E"/></svg>
<div class="b" style="left:115px;top:93px;width:1px;height:20px;background:#8591A2;"></div>
<svg class="b" style="left:125px;top:95px;" width="16" height="16" viewBox="0 0 16 16"><path d="M0 0.5H5L2.5 3.5Z" fill="#2B2B2B"/><circle cx="8.5" cy="9.2" r="4.8" fill="#DCDEE8" stroke="#2B2B2B" stroke-width="1.1"/><path d="M8.5 6.2V9.5H11.3" fill="none" stroke="#2B2B2B" stroke-width="1.1"/></svg>
<svg class="b" style="left:145.5px;top:101.5px;" width="6" height="3.0" viewBox="0 0 6 3.0"><path d="M0 0H6L3.0 3.0Z" fill="#1B293E"/></svg>
<svg class="b" style="left:160px;top:96px;" width="13" height="13" viewBox="0 0 13 13"><path d="M4.5 2.5V0.7H12.3V7.5H10.5" fill="none" stroke="#2B2B2B" stroke-width="1"/><path d="M2.5 4.5V2.7H10.3V9.5H8.5" fill="none" stroke="#2B2B2B" stroke-width="1"/><rect x="0.7" y="4.7" width="7.6" height="7.6" fill="#DCDEE8" stroke="#2B2B2B" stroke-width="1"/><path d="M2.5 8.5H6.5" stroke="#00539C" stroke-width="1.4"/></svg>
<div class="b" style="left:180px;top:93px;width:1px;height:20px;background:#8591A2;"></div>
<svg class="b" style="left:189px;top:96px;" width="14" height="14" viewBox="0 0 16 16"><path d="M9.4 7.4L2.6 14.2" stroke="#2B2B2B" stroke-width="3" stroke-linecap="round"/><circle cx="10.9" cy="5.1" r="4.4" fill="#2B2B2B"/><rect x="10.6" y="3.75" width="7" height="2.7" fill="#CFD6E5" transform="rotate(-45 10.9 5.1)"/></svg>
<div class="b" style="left:207px;top:91px;width:22px;height:24px;background:#FFFCF4;border:1px solid #2B3D5E;"></div>
<svg class="b" style="left:211px;top:100px;" width="15" height="6" viewBox="0 0 15 6"><path d="M0 3.5H15" stroke="#2B2B2B" stroke-width="1.4"/><rect x="5.5" y="0.5" width="9.5" height="3" fill="#2B2B2B"/></svg>
<div class="b" style="left:7px;top:117px;width:464px;height:23px;background:#fff;border:1px solid #E5EAF3;border-left:none;border-right:none;"></div>
<div class="b" style="left:7px;top:140px;width:464px;height:2px;background:#CFD6E5;"></div>
<span class="t c" style="left:11.5px;top:121px;font-size:12px;color:#6D6D6D;">搜索解决方案资源管理器</span>
<span class="t" style="left:144.5px;top:121.5px;font-size:12px;color:#6D6D6D;letter-spacing:0.312px;">(Ctrl+;)</span>
<svg class="b" style="left:443px;top:122px;" width="13" height="13" viewBox="0 0 13 13"><circle cx="8.2" cy="4.8" r="3.3" fill="none" stroke="#555" stroke-width="1.6"/><path d="M6 7L1.2 11.8" stroke="#555" stroke-width="2"/></svg>
<svg class="b" style="left:461px;top:127px;" width="6" height="3" viewBox="0 0 6 3"><path d="M0 0H6L3 3Z" fill="#555"/></svg>
<div class="b" style="left:454px;top:142px;width:17px;height:699px;background:#E8E8EC;"></div>
<svg class="b" style="left:458px;top:150px;" width="9" height="5" viewBox="0 0 9 5"><path d="M0 5H9L4.5 0Z" fill="#868999"/></svg>
<div class="b" style="left:458px;top:402px;width:9px;height:439px;background:#C2C3C9;"></div>
<div class="b" style="left:7px;top:733px;width:447px;height:20px;background:#CCCEDB;"></div>
<svg class="b" style="left:107.5px;top:149px;" width="6" height="10" viewBox="0 0 6 10"><path d="M0.5 0.8V9.2L5 5Z" fill="#fff" stroke="#262626" stroke-width="1" stroke-linejoin="miter"/></svg>
<svg class="b" style="left:127px;top:146px" width="16" height="16" viewBox="0 0 16 16"><use href="#s_folder"/></svg>
<span class="t" style="left:148.5px;top:147px;font-size:12px;color:#0C0C0C;letter-spacing:-0.352px;">TwinSAFE</span>
<svg class="b" style="left:127px;top:165px" width="16" height="16" viewBox="0 0 16 16"><use href="#s_pou"/></svg>
<span class="t" style="left:148.5px;top:166px;font-size:12px;color:#0C0C0C;letter-spacing:0.166px;">MAIN (PRG)</span>
<svg class="b" style="left:127px;top:184px" width="16" height="16" viewBox="0 0 16 16"><use href="#s_pou"/></svg>
<span class="t" style="left:148.5px;top:185px;font-size:12px;color:#0C0C0C;letter-spacing:-0.357px;">PRG_Cell1 (PRG)</span>
<svg class="b" style="left:89.5px;top:206px;" width="6" height="10" viewBox="0 0 6 10"><path d="M0.5 0.8V9.2L5 5Z" fill="#fff" stroke="#262626" stroke-width="1" stroke-linejoin="miter"/></svg>
<svg class="b" style="left:109px;top:203px" width="16" height="16" viewBox="0 0 16 16"><use href="#s_plctask"/></svg>
<span class="t" style="left:130.5px;top:204px;font-size:12px;color:#0C0C0C;letter-spacing:0.199px;">PlcTask (PlcTask)</span>
<svg class="b" style="left:109px;top:222px" width="16" height="16" viewBox="0 0 16 16"><use href="#s_tmc"/></svg>
<span class="t" style="left:130.5px;top:223px;font-size:12px;color:#0C0C0C;letter-spacing:0.112px;">S100.tmc</span>
<svg class="b" style="left:71.5px;top:244px;" width="6" height="10" viewBox="0 0 6 10"><path d="M0.5 0.8V9.2L5 5Z" fill="#fff" stroke="#262626" stroke-width="1" stroke-linejoin="miter"/></svg>
<svg class="b" style="left:91px;top:241px" width="16" height="16" viewBox="0 0 16 16"><use href="#s_instance"/></svg>
<span class="t" style="left:112.5px;top:242px;font-size:12px;color:#0C0C0C;letter-spacing:0.213px;">S100 Instance</span>
<svg class="b" style="left:35.5px;top:263px;" width="6" height="10" viewBox="0 0 6 10"><path d="M0.5 0.8V9.2L5 5Z" fill="#fff" stroke="#262626" stroke-width="1" stroke-linejoin="miter"/></svg>
<svg class="b" style="left:55px;top:260px" width="16" height="16" viewBox="0 0 16 16"><use href="#s_safety"/></svg>
<span class="t" style="left:76.5px;top:261px;font-size:12px;color:#0C0C0C;letter-spacing:-0.831px;">SAFETY</span>
<svg class="b" style="left:55px;top:279px" width="16" height="16" viewBox="0 0 16 16"><use href="#s_cpp"/></svg>
<span class="t" style="left:76.5px;top:280px;font-size:12px;color:#0C0C0C;letter-spacing:0.771px;">C++</span>
<svg class="b" style="left:55px;top:298px" width="16" height="16" viewBox="0 0 16 16"><use href="#s_vision"/></svg>
<span class="t" style="left:76.5px;top:299px;font-size:12px;color:#0C0C0C;letter-spacing:0.302px;">VISION</span>
<svg class="b" style="left:55px;top:317px" width="16" height="16" viewBox="0 0 16 16"><use href="#s_analytics"/></svg>
<span class="t" style="left:76.5px;top:318px;font-size:12px;color:#0C0C0C;letter-spacing:-0.133px;">ANALYTICS</span>
<svg class="b" style="left:35.0px;top:341.0px;" width="7" height="7" viewBox="0 0 7 7"><path d="M6.5 0.5V6.5H0.5Z" fill="#262626" stroke="#262626" stroke-width="0.6"/></svg>
<svg class="b" style="left:55px;top:336px" width="16" height="16" viewBox="0 0 16 16"><use href="#s_io"/></svg>
<span class="t" style="left:76.5px;top:337px;font-size:12px;color:#0C0C0C;letter-spacing:0.928px;">I/O</span>
<svg class="b" style="left:53.0px;top:360.0px;" width="7" height="7" viewBox="0 0 7 7"><path d="M6.5 0.5V6.5H0.5Z" fill="#262626" stroke="#262626" stroke-width="0.6"/></svg>
<svg class="b" style="left:73px;top:355px" width="16" height="16" viewBox="0 0 16 16"><use href="#s_devices"/></svg>
<span class="t" style="left:94.5px;top:356px;font-size:12px;color:#0C0C0C;letter-spacing:-0.027px;">Devices</span>
<svg class="b" style="left:71.0px;top:379.0px;" width="7" height="7" viewBox="0 0 7 7"><path d="M6.5 0.5V6.5H0.5Z" fill="#262626" stroke="#262626" stroke-width="0.6"/></svg>
<svg class="b" style="left:91px;top:374px" width="16" height="16" viewBox="0 0 16 16"><use href="#s_ethercat"/></svg>
<span class="t" style="left:112.5px;top:375px;font-size:12px;color:#0C0C0C;letter-spacing:0.199px;">Device 1 (EtherCAT)</span>
<svg class="b" style="left:109px;top:393px" width="16" height="16" viewBox="0 0 16 16"><use href="#s_image"/></svg>
<span class="t" style="left:130.5px;top:394px;font-size:12px;color:#0C0C0C;letter-spacing:0.568px;">Image</span>
<svg class="b" style="left:109px;top:412px" width="16" height="16" viewBox="0 0 16 16"><use href="#s_image"/></svg>
<span class="t" style="left:130.5px;top:413px;font-size:12px;color:#0C0C0C;letter-spacing:0.610px;">Image-2</span>
<svg class="b" style="left:109px;top:431px" width="16" height="16" viewBox="0 0 16 16"><use href="#s_image"/></svg>
<span class="t" style="left:130.5px;top:432px;font-size:12px;color:#0C0C0C;letter-spacing:0.633px;">Image-Info</span>
<svg class="b" style="left:89.5px;top:453px;" width="6" height="10" viewBox="0 0 6 10"><path d="M0.5 0.8V9.2L5 5Z" fill="#fff" stroke="#262626" stroke-width="1" stroke-linejoin="miter"/></svg>
<svg class="b" style="left:109px;top:450px" width="16" height="16" viewBox="0 0 16 16"><use href="#s_sync"/></svg>
<span class="t" style="left:130.5px;top:451px;font-size:12px;color:#0C0C0C;letter-spacing:-0.037px;">SyncUnits</span>
<svg class="b" style="left:89.5px;top:472px;" width="6" height="10" viewBox="0 0 6 10"><path d="M0.5 0.8V9.2L5 5Z" fill="#fff" stroke="#262626" stroke-width="1" stroke-linejoin="miter"/></svg>
<svg class="b" style="left:109px;top:469px" width="16" height="16" viewBox="0 0 16 16"><use href="#s_inputs"/></svg>
<span class="t" style="left:130.5px;top:470px;font-size:12px;color:#0C0C0C;letter-spacing:0.383px;">Inputs</span>
<svg class="b" style="left:89.5px;top:491px;" width="6" height="10" viewBox="0 0 6 10"><path d="M0.5 0.8V9.2L5 5Z" fill="#fff" stroke="#262626" stroke-width="1" stroke-linejoin="miter"/></svg>
<svg class="b" style="left:109px;top:488px" width="16" height="16" viewBox="0 0 16 16"><use href="#s_outputs"/></svg>
<span class="t" style="left:130.5px;top:489px;font-size:12px;color:#0C0C0C;letter-spacing:0.410px;">Outputs</span>
<svg class="b" style="left:89.5px;top:510px;" width="6" height="10" viewBox="0 0 6 10"><path d="M0.5 0.8V9.2L5 5Z" fill="#fff" stroke="#262626" stroke-width="1" stroke-linejoin="miter"/></svg>
<svg class="b" style="left:109px;top:507px" width="16" height="16" viewBox="0 0 16 16"><use href="#s_info"/></svg>
<span class="t" style="left:130.5px;top:508px;font-size:12px;color:#0C0C0C;letter-spacing:0.416px;">InfoData</span>
<svg class="b" style="left:89.5px;top:529px;" width="6" height="10" viewBox="0 0 6 10"><path d="M0.5 0.8V9.2L5 5Z" fill="#fff" stroke="#262626" stroke-width="1" stroke-linejoin="miter"/></svg>
<svg class="b" style="left:109px;top:526px" width="16" height="16" viewBox="0 0 16 16"><use href="#s_ek"/></svg>
<span class="t" style="left:130.5px;top:527px;font-size:12px;color:#0C0C0C;letter-spacing:0.116px;">A0 (EK1100)</span>
<svg class="b" style="left:89.5px;top:548px;" width="6" height="10" viewBox="0 0 6 10"><path d="M0.5 0.8V9.2L5 5Z" fill="#fff" stroke="#262626" stroke-width="1" stroke-linejoin="miter"/></svg>
<svg class="b" style="left:109px;top:545px" width="16" height="16" viewBox="0 0 16 16"><use href="#s_box"/></svg>
<span class="t" style="left:130.5px;top:546px;font-size:12px;color:#0C0C0C;letter-spacing:0.360px;">TrackShuttle (CMMT-ST-MP-S0)</span>
<svg class="b" style="left:89.5px;top:567px;" width="6" height="10" viewBox="0 0 6 10"><path d="M0.5 0.8V9.2L5 5Z" fill="#fff" stroke="#262626" stroke-width="1" stroke-linejoin="miter"/></svg>
<svg class="b" style="left:109px;top:564px" width="16" height="16" viewBox="0 0 16 16"><use href="#s_box"/></svg>
<span class="t" style="left:130.5px;top:565px;font-size:12px;color:#0C0C0C;letter-spacing:0.323px;">TrackConvF (CMMT-ST-MP-S0)</span>
<svg class="b" style="left:89.5px;top:586px;" width="6" height="10" viewBox="0 0 6 10"><path d="M0.5 0.8V9.2L5 5Z" fill="#fff" stroke="#262626" stroke-width="1" stroke-linejoin="miter"/></svg>
<svg class="b" style="left:109px;top:583px" width="16" height="16" viewBox="0 0 16 16"><use href="#s_box"/></svg>
<span class="t" style="left:130.5px;top:584px;font-size:12px;color:#0C0C0C;letter-spacing:0.363px;">TrackConvB (CMMT-ST-MP-S0)</span>
<svg class="b" style="left:89.5px;top:605px;" width="6" height="10" viewBox="0 0 6 10"><path d="M0.5 0.8V9.2L5 5Z" fill="#fff" stroke="#262626" stroke-width="1" stroke-linejoin="miter"/></svg>
<svg class="b" style="left:109px;top:602px" width="16" height="16" viewBox="0 0 16 16"><use href="#s_drive2"/></svg>
<span class="t" style="left:130.5px;top:603px;font-size:12px;color:#0C0C0C;letter-spacing:0.307px;">DispensingXY (AX5206-0000-0215)</span>
<svg class="b" style="left:89.0px;top:626.0px;" width="7" height="7" viewBox="0 0 7 7"><path d="M6.5 0.5V6.5H0.5Z" fill="#262626" stroke="#262626" stroke-width="0.6"/></svg>
<svg class="b" style="left:109px;top:621px" width="16" height="16" viewBox="0 0 16 16"><use href="#s_drive1"/></svg>
<span class="t" style="left:130.5px;top:622px;font-size:12px;color:#0C0C0C;letter-spacing:0.323px;">DispensingZ (AX5103-0000-0215)</span>
<svg class="b" style="left:107.0px;top:645.0px;" width="7" height="7" viewBox="0 0 7 7"><path d="M6.5 0.5V6.5H0.5Z" fill="#262626" stroke="#262626" stroke-width="0.6"/></svg>
<svg class="b" style="left:127px;top:640px" width="16" height="16" viewBox="0 0 16 16"><use href="#s_inputs"/></svg>
<span class="t" style="left:148.5px;top:641px;font-size:12px;color:#0C0C0C;letter-spacing:0.023px;">AT</span>
<svg class="b" style="left:145px;top:659px" width="16" height="16" viewBox="0 0 16 16"><use href="#s_link"/></svg>
<span class="t" style="left:166.5px;top:660px;font-size:12px;color:#0C0C0C;letter-spacing:0.465px;">Drive status word</span>
<svg class="b" style="left:145px;top:678px" width="16" height="16" viewBox="0 0 16 16"><use href="#s_link"/></svg>
<span class="t" style="left:166.5px;top:679px;font-size:12px;color:#0C0C0C;letter-spacing:0.453px;">Position feedback 1 value</span>
<svg class="b" style="left:145px;top:697px" width="16" height="16" viewBox="0 0 16 16"><use href="#s_link"/></svg>
<span class="t" style="left:166.5px;top:698px;font-size:12px;color:#0C0C0C;letter-spacing:0.410px;">Following distance</span>
<svg class="b" style="left:145px;top:716px" width="16" height="16" viewBox="0 0 16 16"><use href="#s_link"/></svg>
<span class="t" style="left:166.5px;top:717px;font-size:12px;color:#0C0C0C;letter-spacing:0.419px;">Digital inputs, state</span>
<svg class="b" style="left:145px;top:735px" width="16" height="16" viewBox="0 0 16 16"><use href="#s_link"/></svg>
<span class="t" style="left:166.5px;top:736px;font-size:12px;color:#0C0C0C;letter-spacing:0.638px;">Torque/force feedback value</span>
<svg class="b" style="left:107.5px;top:757px;" width="6" height="10" viewBox="0 0 6 10"><path d="M0.5 0.8V9.2L5 5Z" fill="#fff" stroke="#262626" stroke-width="1" stroke-linejoin="miter"/></svg>
<svg class="b" style="left:127px;top:754px" width="16" height="16" viewBox="0 0 16 16"><use href="#s_outputs"/></svg>
<span class="t" style="left:148.5px;top:755px;font-size:12px;color:#0C0C0C;letter-spacing:0.333px;">MDT</span>
<svg class="b" style="left:107.5px;top:776px;" width="6" height="10" viewBox="0 0 6 10"><path d="M0.5 0.8V9.2L5 5Z" fill="#fff" stroke="#262626" stroke-width="1" stroke-linejoin="miter"/></svg>
<svg class="b" style="left:127px;top:773px" width="16" height="16" viewBox="0 0 16 16"><use href="#s_info"/></svg>
<span class="t" style="left:148.5px;top:774px;font-size:12px;color:#0C0C0C;letter-spacing:0.063px;">WcState</span>
<svg class="b" style="left:107.5px;top:795px;" width="6" height="10" viewBox="0 0 6 10"><path d="M0.5 0.8V9.2L5 5Z" fill="#fff" stroke="#262626" stroke-width="1" stroke-linejoin="miter"/></svg>
<svg class="b" style="left:127px;top:792px" width="16" height="16" viewBox="0 0 16 16"><use href="#s_info"/></svg>
<span class="t" style="left:148.5px;top:793px;font-size:12px;color:#0C0C0C;letter-spacing:0.416px;">InfoData</span>
<svg class="b" style="left:107.5px;top:814px;" width="6" height="10" viewBox="0 0 6 10"><path d="M0.5 0.8V9.2L5 5Z" fill="#fff" stroke="#262626" stroke-width="1" stroke-linejoin="miter"/></svg>
<svg class="b" style="left:127px;top:811px" width="16" height="16" viewBox="0 0 16 16"><use href="#s_ax5805"/></svg>
<span class="t" style="left:148.5px;top:812px;font-size:12px;color:#0C0C0C;letter-spacing:0.263px;">DispensingZ (AX5805)</span>
<svg class="b" style="left:89.5px;top:833px;" width="6" height="10" viewBox="0 0 6 10"><path d="M0.5 0.8V9.2L5 5Z" fill="#fff" stroke="#262626" stroke-width="1" stroke-linejoin="miter"/></svg>
<svg class="b" style="left:109px;top:830px" width="16" height="16" viewBox="0 0 16 16"><use href="#s_drive1"/></svg>
<span class="t" style="left:130.5px;top:831px;font-size:12px;color:#0C0C0C;letter-spacing:0.337px;">ShuttleWidth (AX5103-0000-0215)</span>
<div class="b" style="left:478px;top:65px;width:112px;height:21px;background:#FFF29D;"></div>
<span class="t" style="left:482px;top:68.5px;font-size:12px;color:#1E1E1E;letter-spacing:0.106px;">E605-S100</span>
<svg class="b" style="left:554px;top:72px;" width="10" height="9" viewBox="554 72 10 9"><path d="M555 76.4H558.5M558.6 73V80M558.6 74.7H562.4V77.9" fill="none" stroke="#695A32" stroke-width="1.1"/><path d="M558.6 78.2H563" stroke="#695A32" stroke-width="1.7"/></svg>
<svg class="b" style="left:573px;top:72.5px;" width="10" height="9" viewBox="573 72.5 10 9"><path d="M573.6 73.2L582.5 80.9M582.5 73.2L573.6 80.9" stroke="#695A32" stroke-width="1.35"/></svg>
<div class="b" style="left:478px;top:86px;width:676px;height:2px;background:#FFF29D;"></div>
<div class="b" style="left:478px;top:88px;width:676px;height:566px;background:#F0F0F0;border-left:2px solid #A0A0A0;border-top:1px solid #A0A0A0;border-bottom:2px solid #fff;"></div>
<div class="b" style="left:480px;top:89px;width:674px;height:563px;border-left:1px solid #696969;border-top:1px solid #696969;"></div>
<div class="b" style="left:489px;top:123px;width:680px;height:509px;background:#fff;border:1px solid #DCDCDC;"></div>
<div class="b" style="left:490px;top:101px;width:60px;height:23px;background:#F0F0F0;border:1px solid #D9D9D9;border-bottom:1px solid #DCDCDC;"></div>
<div class="b" style="left:549px;top:101px;width:48px;height:23px;background:#F0F0F0;border:1px solid #D9D9D9;border-bottom:1px solid #DCDCDC;"></div>
<div class="b" style="left:596px;top:99px;width:53px;height:25px;background:#fff;border:1px solid #DCDCDC;border-bottom:none;"></div>
<span class="t" style="left:496px;top:104.5px;font-size:12px;color:#000;letter-spacing:0.545px;">Variable</span>
<span class="t" style="left:556px;top:104.5px;font-size:12px;color:#000;letter-spacing:0.131px;">Flags</span>
<span class="t" style="left:604px;top:103.5px;font-size:12px;color:#000;letter-spacing:0.385px;">Online</span>
<span class="t" style="left:504px;top:143px;font-size:12px;color:#000;letter-spacing:0.277px;">Value:</span>
<span class="t" style="left:504px;top:174px;font-size:12px;color:#000;letter-spacing:0.432px;">New Value:</span>
<span class="t" style="left:504px;top:220px;font-size:12px;color:#000;letter-spacing:0.518px;">Comment:</span>
<div class="b" style="left:597px;top:140px;width:425px;height:26px;background:#fff;border:1px solid #7A7A7A;"></div>
<span class="t" style="left:601.5px;top:144px;font-size:12px;color:#000;letter-spacing:0.242px;">-417</span>
<div class="b" style="left:598px;top:175px;width:86px;height:24px;background:#E1E1E1;border:2px solid #0078D7;"></div>
<span class="t" style="left:620.5px;top:178.5px;font-size:12px;color:#000;letter-spacing:-0.023px;">Force...</span>
<div class="b" style="left:714px;top:175px;width:86px;height:24px;background:#CCCCCC;border:1px solid #BFBFBF;"></div>
<span class="t" style="left:734.5px;top:178.5px;font-size:12px;color:#838383;letter-spacing:0.067px;">Release</span>
<div class="b" style="left:936px;top:175px;width:86px;height:24px;background:#E1E1E1;border:1px solid #ADADAD;"></div>
<span class="t" style="left:959.5px;top:178.5px;font-size:12px;color:#000;letter-spacing:0.215px;">Write...</span>
<div class="b" style="left:597px;top:216px;width:425px;height:135px;background:#fff;border:1px solid #7A7A7A;"></div>
<div class="b" style="left:1004px;top:217px;width:17px;height:133px;background:#F0F0F0;"></div>
<svg class="b" style="left:1008px;top:224px;" width="8" height="5" viewBox="0 0 8 5"><path d="M0.6 4.4L4 1L7.4 4.4" fill="none" stroke="#A0A0A0" stroke-width="1.1"/></svg>
<svg class="b" style="left:1008px;top:339px;" width="8" height="5" viewBox="0 0 8 5"><path d="M0.6 0.6L4 4L7.4 0.6" fill="none" stroke="#A0A0A0" stroke-width="1.1"/></svg>
<svg class="b" style="left:504px;top:374px;" width="517" height="199" viewBox="0 0 517 199"><rect x="0" y="0" width="517" height="199" fill="#FFFFE1"/><g stroke="#5AB4B4" stroke-width="1" fill="none"><path d="M5.5 2V199" /><path d="M25.5 2V199" /><path d="M45.5 2V199" /><path d="M65.5 2V199" /><path d="M85.5 2V199" /><path d="M105.5 2V199" /><path d="M125.5 2V199" /><path d="M145.5 2V199" /><path d="M165.5 2V199" /><path d="M185.5 2V199" /><path d="M205.5 2V199" /><path d="M225.5 2V199" /><path d="M245.5 2V199" /><path d="M265.5 2V199" /><path d="M285.5 2V199" /><path d="M305.5 2V199" /><path d="M325.5 2V199" /><path d="M345.5 2V199" /><path d="M365.5 2V199" /><path d="M385.5 2V199" /><path d="M405.5 2V199" /><path d="M425.5 2V199" /><path d="M445.5 2V199" /><path d="M465.5 2V199" /><path d="M485.5 2V199" /><path d="M505.5 2V199" /><path d="M2 21.50H517" /><path d="M2 40.50H517" /><path d="M2 60.50H517" /><path d="M2 79.50H517" /><path d="M2 99.50H517" /><path d="M2 119.50H517" /><path d="M2 138.50H517" /><path d="M2 158.50H517" /><path d="M2 177.50H517" /><path d="M2 197.50H517" /></g><rect x="468" y="5" width="41" height="23" fill="#FFFFE1"/><path d="M2 97.9H517" stroke="#30C030" stroke-width="1"/><path d="M5.5 99.5H276V100.5H337V99.5H517" stroke="#2200E8" stroke-width="2.4" fill="none"/><path d="M0.75 199V0.75H517" stroke="#808080" stroke-width="1.5" fill="none"/><path d="M516.5 1V199" stroke="#E8E8E8" stroke-width="1" fill="none"/></svg>
<span class="t" style="left:983px;top:384.5px;font-size:12px;color:#4A1EF0;letter-spacing:-0.008px;">-417</span>
<div class="b" style="left:478px;top:660px;width:676px;height:181px;background:#fff;border-left:1px solid #8E9BBC;border-top:1px solid #8E9BBC;"></div>
<div class="b" style="left:479px;top:661px;width:675px;height:23px;background:#4D6082;"></div>
<span class="t c" style="left:483px;top:664.5px;font-size:12px;color:#fff;">错误列表</span>
<div class="b" style="left:479px;top:684px;width:675px;height:26px;background:#CFD6E5;"></div>
<div class="b" style="left:486px;top:687px;width:150px;height:20px;background:#fff;border:1px solid #E5EAF3;"></div>
<span class="t c" style="left:489px;top:689.5px;font-size:12px;color:#1E1E1E;">整个解决方案</span>
<svg class="b" style="left:626px;top:696px;" width="6" height="3" viewBox="0 0 6 3"><path d="M0 0H6L3 3Z" fill="#1B293E"/></svg>
<div class="b" style="left:642px;top:688px;width:1px;height:18px;background:#8591A2;"></div>
<div class="b" style="left:647px;top:686px;width:66px;height:22px;background:#FFFCF4;border:1px solid #2B3D5E;"></div>
<svg class="b" style="left:650px;top:689px;" width="16" height="16" viewBox="0 0 16 16"><circle cx="8" cy="8" r="7.2" fill="#E51400"/><circle cx="8" cy="8" r="7.2" fill="none" stroke="#B00D00" stroke-width="0.8"/><path d="M4.8 4.8L11.2 11.2M11.2 4.8L4.8 11.2" stroke="#fff" stroke-width="2"/></svg>
<span class="t c" style="left:670px;top:689.5px;font-size:12px;color:#1E1E1E;">错误</span>
<span class="t" style="left:697.5px;top:690px;font-size:12px;color:#1E1E1E;letter-spacing:0.312px;">0</span>
<div class="b" style="left:716px;top:688px;width:1px;height:18px;background:#8591A2;"></div>
<svg class="b" style="left:724px;top:689px;" width="16" height="16" viewBox="0 0 16 16"><path d="M8 1.2L15.3 14.5H0.7Z" fill="#FFCC00" stroke="#D8A800" stroke-width="0.8" stroke-linejoin="round"/><path d="M8 5.5V10.2" stroke="#1E1E1E" stroke-width="1.7"/><rect x="7.15" y="11.3" width="1.7" height="1.7" fill="#1E1E1E"/></svg>
<span class="t c" style="left:744px;top:689.5px;font-size:12px;color:#1E1E1E;">警告</span>
<span class="t" style="left:771.5px;top:690px;font-size:12px;color:#1E1E1E;letter-spacing:0.312px;">0</span>
<div class="b" style="left:789px;top:688px;width:1px;height:18px;background:#8591A2;"></div>
<svg class="b" style="left:797px;top:689px;" width="16" height="16" viewBox="0 0 16 16"><circle cx="8" cy="8" r="7.3" fill="#1BA1E2"/><circle cx="8" cy="8" r="7.3" fill="none" stroke="#0C7FB8" stroke-width="0.7"/><rect x="7.1" y="6.6" width="1.9" height="5.8" fill="#fff"/><rect x="7.1" y="3.6" width="1.9" height="1.9" fill="#fff"/></svg>
<span class="t" style="left:818.5px;top:690px;font-size:12px;color:#1E1E1E;letter-spacing:-0.688px;">1</span>
<span class="t c" style="left:825px;top:689.5px;font-size:12px;color:#1E1E1E;">消息</span>
<span class="t c" style="left:853px;top:689.5px;font-size:12px;color:#1E1E1E;">的</span>
<span class="t" style="left:868.5px;top:690px;font-size:12px;color:#1E1E1E;letter-spacing:0.312px;">0</span>
<div class="b" style="left:887px;top:688px;width:1px;height:18px;background:#8591A2;"></div>
<span class="t" style="left:895.5px;top:690px;font-size:12px;color:#1E1E1E;letter-spacing:0.163px;">Clear</span>
<div class="b" style="left:936px;top:688px;width:1px;height:18px;background:#8591A2;"></div>
<div class="b" style="left:944px;top:687px;width:150px;height:20px;background:#fff;border:1px solid #E5EAF3;"></div>
<span class="t c" style="left:947.5px;top:689.5px;font-size:12px;color:#1E1E1E;">生成</span>
<span class="t" style="left:974.5px;top:690px;font-size:12px;color:#1E1E1E;letter-spacing:0.472px;">+ IntelliSense</span>
<svg class="b" style="left:1084.5px;top:696px;" width="6" height="3" viewBox="0 0 6 3"><path d="M0 0H6L3 3Z" fill="#1B293E"/></svg>
<div class="b" style="left:479px;top:710px;width:2px;height:23px;background:#CFD6E5;"></div>
<div class="b" style="left:481px;top:710px;width:673px;height:23px;background:#F5F5F5;border-bottom:1px solid #CCCEDB;"></div>
<div class="b" style="left:506px;top:711px;width:1px;height:21px;background:#CCCEDB;"></div>
<div class="b" style="left:532px;top:711px;width:1px;height:21px;background:#CCCEDB;"></div>
<svg class="b" style="left:522px;top:713px;" width="6" height="5" viewBox="0 0 6 5"><path d="M0 0.5H6M1 0.5L2.6 2.4V5M5 0.5L3.4 2.4V5M2.6 2.5H3.4" fill="none" stroke="#6a6a6a" stroke-width="0.9"/></svg>
<span class="t c" style="left:536px;top:714px;font-size:12px;color:#1E1E1E;">说明</span>
</body></html>
